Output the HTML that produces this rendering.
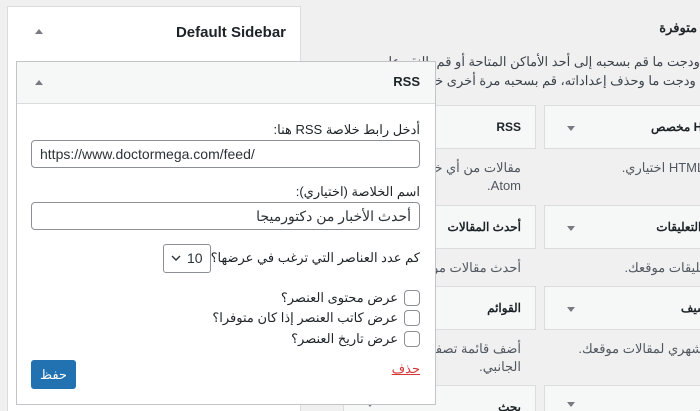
<!DOCTYPE html>
<html style="width:700px;height:411px;overflow:hidden"><head><meta charset="utf-8"><style>
*{box-sizing:border-box;margin:0;padding:0}
body{width:700px;height:411px;overflow:hidden;background:#f0f0f1;position:relative;font-family:"Liberation Sans","Noto Sans CJK SC",sans-serif;font-size:13px;color:#3c434a}
#w{position:absolute;left:0;top:0;width:700px;height:411px;overflow:hidden}
.a{position:absolute}
.rt{direction:rtl;text-align:right;white-space:nowrap}
.tri{position:absolute;width:0;height:0;border-left:4px solid transparent;border-right:4px solid transparent}
.up{border-bottom:5px solid #787c82}
.dn{border-top:5px solid #787c82}
.card{position:absolute;background:#f6f7f7;border:1px solid #dcdcde;overflow:hidden}
.ct{position:absolute;top:14px;font-weight:bold;font-size:12px;color:#1d2327;direction:rtl;white-space:nowrap}
.desc{position:absolute;direction:rtl;text-align:right;color:#50575e;font-size:13px;line-height:18px}
.cb{position:absolute;width:16px;height:16px;border:1px solid #8c8f94;border-radius:4px;background:#fff}
</style></head><body><div id="w">
<div class="a rt" style="right:-37px;top:20px;font-weight:bold;font-size:13px;color:#1d2327">ودجات متوفرة</div>
<div class="a rt" style="right:-38px;top:52px;line-height:19px;font-size:13px;color:#3c434a">لتفعيل ودجت ما قم بسحبه إلى أحد الأماكن المتاحة أو قم بالنقر عليه<br>لتعطيل ودجت ما وحذف إعداداته، قم بسحبه مرة أخرى خارجاً</div>

<div class="card" style="left:343px;top:105px;width:193px;height:44px"><div class="ct" style="right:14px">RSS</div></div>
<div class="desc" style="left:343px;width:178px;top:159px">مقالات من أي خلاصة RSS أو Atom.</div>
<div class="card" style="left:343px;top:205px;width:193px;height:44px"><div class="ct" style="right:14px">أحدث المقالات</div></div>
<div class="desc" style="left:343px;width:178px;top:259px;white-space:nowrap">أحدث مقالات موقعك.</div>
<div class="card" style="left:343px;top:286px;width:193px;height:44px"><div class="ct" style="right:14px">القوائم</div></div>
<div class="desc" style="left:343px;width:178px;top:340px">أضف قائمة تصفح إلى الشريط الجانبي.</div>
<div class="card" style="left:343px;top:385px;width:193px;height:44px"><div class="tri dn" style="left:22px;top:16px"></div><div class="ct" style="right:14px">بحث</div></div>

<div class="card" style="left:544px;top:105px;width:200px;height:44px"><div class="tri dn" style="left:22px;top:20px"></div><div class="ct" style="right:16px">HTML مخصص</div></div>
<div class="desc" style="left:544px;width:200px;top:159px;white-space:nowrap">محتوى HTML اختياري.</div>
<div class="card" style="left:544px;top:205px;width:200px;height:44px"><div class="tri dn" style="left:22px;top:20px"></div><div class="ct" style="right:10px">أحدث التعليقات</div></div>
<div class="desc" style="left:544px;width:200px;top:259px;white-space:nowrap">أحدث تعليقات موقعك.</div>
<div class="card" style="left:544px;top:286px;width:200px;height:44px"><div class="tri dn" style="left:22px;top:20px"></div><div class="ct" style="right:20px">الأرشيف</div></div>
<div class="desc" style="left:544px;width:200px;top:340px;white-space:nowrap">أرشيف شهري لمقالات موقعك.</div>
<div class="card" style="left:544px;top:385px;width:200px;height:44px"><div class="tri dn" style="left:22px;top:16px"></div><div class="ct" style="right:10px">التقويم</div></div>

<div class="a" style="left:7px;top:6px;width:294px;height:420px;background:#fff;border:1px solid #dcdcde"></div>
<div class="tri up" style="left:35px;top:29px"></div>
<div class="a" style="right:414px;top:24px;font-weight:bold;font-size:15px;color:#1d2327">Default Sidebar</div>

<div class="a" style="left:16px;top:61px;width:420px;height:344px;background:#fff;border:1px solid #c3c4c7"></div>
<div class="a" style="left:17px;top:62px;width:418px;height:42px;background:#f6f7f7;border-bottom:1px solid #dcdcde"></div>
<div class="tri up" style="left:35px;top:80px"></div>
<div class="a" style="right:280px;top:74px;font-weight:bold;font-size:13px;color:#1d2327">RSS</div>

<div class="a rt" style="right:280px;top:122px;color:#1d2327">أدخل رابط خلاصة RSS هنا:</div>
<div class="a" style="left:31px;top:140px;width:389px;height:28px;border:1px solid #8c8f94;border-radius:4px;background:#fff;padding:5px 8px;font-size:14px;color:#2c3338">https://www.doctormega.com/feed/</div>
<div class="a rt" style="right:280px;top:184px;color:#1d2327">اسم الخلاصة (اختياري):</div>
<div class="a rt" style="left:31px;top:202px;width:389px;height:28px;border:1px solid #8c8f94;border-radius:4px;background:#fff;padding:5px 8px;font-size:14px;color:#2c3338">أحدث الأخبار من دكتورميجا</div>

<div class="a rt" style="right:280px;top:250px;color:#1d2327">كم عدد العناصر التي ترغب في عرضها؟</div>
<div class="a" style="left:163px;top:244px;width:48px;height:29px;border:1px solid #8c8f94;border-radius:3px;background:#fff"></div>
<div class="a" style="left:187px;top:250px;font-size:14px;color:#2c3338">10</div>
<svg class="a" style="left:171px;top:254px" width="10" height="8" viewBox="0 0 10 8"><path d="M1 2 L5 6 L9 2" fill="none" stroke="#2c3338" stroke-width="1.4"/></svg>

<div class="cb" style="left:404px;top:290px"></div>
<div class="cb" style="left:404px;top:310px"></div>
<div class="cb" style="left:404px;top:331px"></div>
<div class="a rt" style="right:302px;top:290px;color:#1d2327">عرض محتوى العنصر؟</div>
<div class="a rt" style="right:302px;top:310px;color:#1d2327">عرض كاتب العنصر إذا كان متوفرا؟</div>
<div class="a rt" style="right:302px;top:331px;color:#1d2327">عرض تاريخ العنصر؟</div>

<div class="a" style="left:31px;top:360px;width:45px;height:29px;background:#2271b1;border-radius:3px;color:#fff;text-align:center;line-height:29px;font-size:13px">حفظ</div>
<div class="a rt" style="right:280px;top:361px;color:#d63638;text-decoration:underline">حذف</div>
</div></body></html>
